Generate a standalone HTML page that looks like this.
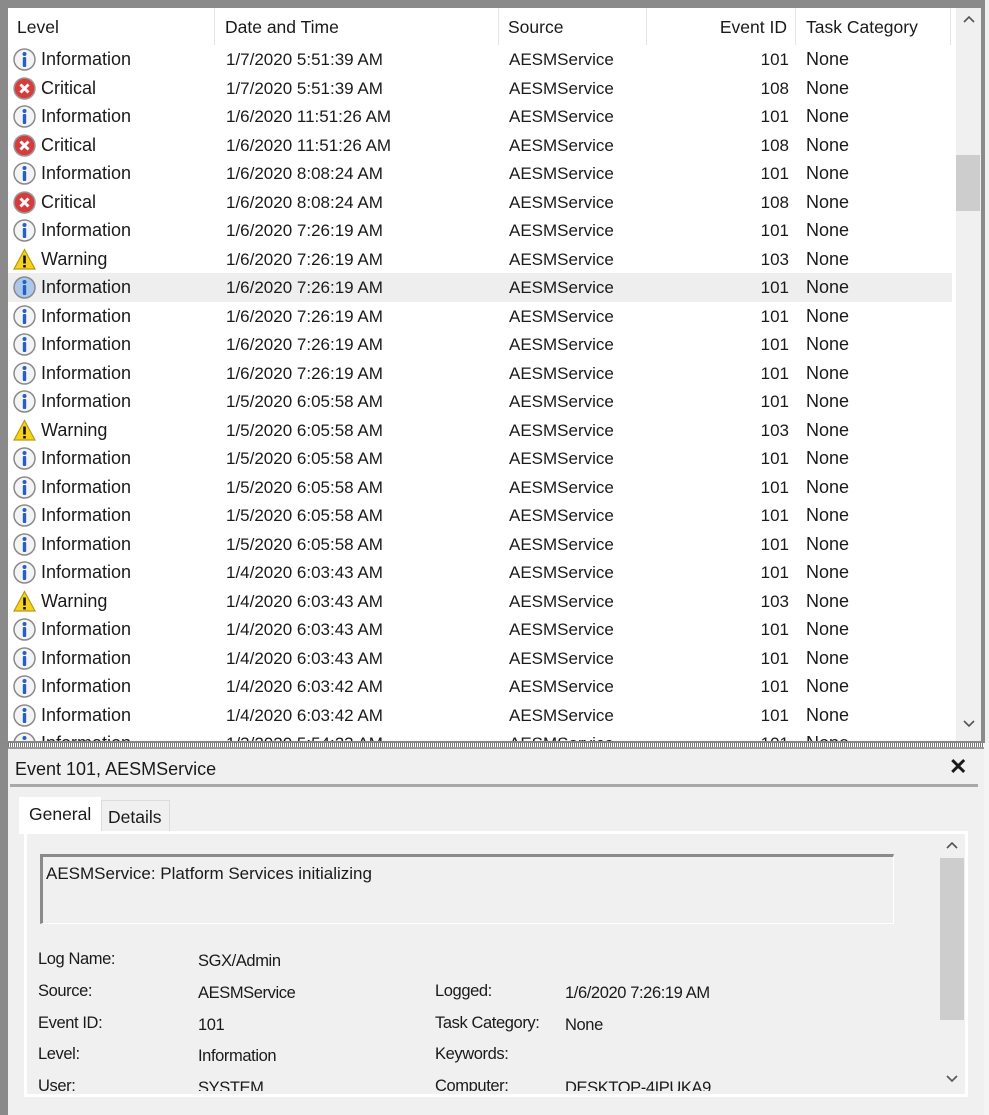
<!DOCTYPE html>
<html><head><meta charset="utf-8"><style>
*{margin:0;padding:0;box-sizing:border-box}
body{width:989px;height:1115px;background:#f0f0f0;font-family:"Liberation Sans",sans-serif;color:#1a1a1a;position:relative;overflow:hidden}
.abs{position:absolute}
#frame{left:0;top:0;width:985px;height:743px;border:1px solid #555;border-top:8px solid #8a8a8a;border-left:8px solid #8a8a8a;border-right:4px solid #8a8a8a;border-bottom:2px solid #888;background:#fff;overflow:hidden}
#list{left:0;top:0;width:948px;height:733px;overflow:hidden;background:#fff}
.hdr{position:absolute;top:0;height:37px;font-size:17.5px;line-height:39px;border-right:1px solid #e5e5e5}
.row{position:absolute;left:0;width:944px;height:28.5px;font-size:17px;line-height:29px}
.row span{position:absolute;top:0;white-space:nowrap}
.row span.l{font-size:18px}
.sel{background:#eeeeee}
.ic{position:absolute;left:5px;top:3px;width:23px;height:23px}
#vs{left:948px;top:0;width:25px;height:733px;background:#f0f0f0}
</style></head><body>
<div id="frame" class="abs">
<div id="list" class="abs">
<div class="hdr" style="left:0;width:207px;padding-left:9px">Level</div>
<div class="hdr" style="left:207px;width:284px;padding-left:10px">Date and Time</div>
<div class="hdr" style="left:491px;width:148px;padding-left:9px">Source</div>
<div class="hdr" style="left:639px;width:149px;text-align:right;padding-right:8px">Event ID</div>
<div class="hdr" style="left:788px;width:155px;padding-left:10px">Task Category</div>
<div id="rows"></div>
</div>
<div id="vs" class="abs">
<svg class="abs" style="left:7px;top:8px" width="12" height="8"><path d="M1 6L6 1L11 6" stroke="#555" stroke-width="1.6" fill="none"/></svg>
<div class="abs" style="left:0;top:147px;width:24px;height:56px;background:#cdcdcd"></div>
<svg class="abs" style="left:7px;top:712px" width="12" height="8"><path d="M1 1L6 6L11 1" stroke="#555" stroke-width="1.6" fill="none"/></svg>
</div>
</div>
<div class="abs" style="left:8px;top:743px;width:977px;height:6px;background:repeating-linear-gradient(90deg,#777 0 1px,#fff 1px 2px);border-bottom:2px solid #999"></div>
<div class="abs" style="left:0;top:743px;width:8px;height:372px;background:#8a8a8a"></div>
<div class="abs" style="left:984px;top:743px;width:5px;height:372px;background:#f4f4f4"></div>
<div class="abs" style="left:15px;top:757px;font-size:18px;line-height:24px">Event 101, AESMService</div>
<div class="abs" style="left:949px;top:754px;font-size:22px;font-weight:bold;line-height:26px">✕</div>
<div class="abs" style="left:10px;top:784px;width:968px;height:3px;background:#a8a8a8"></div>
<div class="abs" style="left:101px;top:800px;width:69px;height:32px;border:1px solid #dcdcdc;border-bottom:none;font-size:17.5px;line-height:33px;padding-left:6px">Details</div>
<div class="abs" style="left:24px;top:831px;width:944px;height:266px;border:3px solid #fff;background:#f0f0f0"></div>
<div class="abs" style="left:19px;top:797px;width:82px;height:37px;background:#fff;font-size:17.5px;line-height:34px;padding-left:10px">General</div>
<div class="abs" style="left:40px;top:854px;width:854px;height:70px;border-top:3px solid #8a8a8a;border-left:3px solid #8a8a8a;border-right:1px solid #fff;border-bottom:1px solid #fff;font-size:17px;line-height:34px;padding-left:3px">AESMService: Platform Services initializing</div>
<div class="abs" style="left:940px;top:834px;width:24px;height:260px;background:#f0f0f0">
<svg class="abs" style="left:6px;top:8px" width="12" height="8"><path d="M1 6L6 1L11 6" stroke="#555" stroke-width="1.6" fill="none"/></svg>
<div class="abs" style="left:0;top:24px;width:24px;height:162px;background:#cdcdcd"></div>
<svg class="abs" style="left:6px;top:241px" width="12" height="8"><path d="M1 1L6 6L11 1" stroke="#555" stroke-width="1.6" fill="none"/></svg>
</div>
<div class="abs" style="left:27px;top:940px;width:912px;height:151px;overflow:hidden;font-size:16.5px;letter-spacing:-0.4px">
<div class="abs" style="left:11px;top:10px">Log Name:</div><div class="abs" style="left:171px;top:12px">SGX/Admin</div>
<div class="abs" style="left:11px;top:42px">Source:</div><div class="abs" style="left:171px;top:44px">AESMService</div>
<div class="abs" style="left:408px;top:42px">Logged:</div><div class="abs" style="left:538px;top:44px">1/6/2020 7:26:19 AM</div>
<div class="abs" style="left:11px;top:74px">Event ID:</div><div class="abs" style="left:171px;top:76px">101</div>
<div class="abs" style="left:408px;top:74px">Task Category:</div><div class="abs" style="left:538px;top:76px">None</div>
<div class="abs" style="left:11px;top:105px">Level:</div><div class="abs" style="left:171px;top:107px">Information</div>
<div class="abs" style="left:408px;top:105px">Keywords:</div>
<div class="abs" style="left:11px;top:137px">User:</div><div class="abs" style="left:171px;top:139px">SYSTEM</div>
<div class="abs" style="left:408px;top:137px">Computer:</div><div class="abs" style="left:538px;top:139px">DESKTOP-4IPUKA9</div>
</div>
<script>
var d=[["I","1/7/2020 5:51:39 AM",101],["C","1/7/2020 5:51:39 AM",108],["I","1/6/2020 11:51:26 AM",101],["C","1/6/2020 11:51:26 AM",108],["I","1/6/2020 8:08:24 AM",101],["C","1/6/2020 8:08:24 AM",108],["I","1/6/2020 7:26:19 AM",101],["W","1/6/2020 7:26:19 AM",103],["S","1/6/2020 7:26:19 AM",101],["I","1/6/2020 7:26:19 AM",101],["I","1/6/2020 7:26:19 AM",101],["I","1/6/2020 7:26:19 AM",101],["I","1/5/2020 6:05:58 AM",101],["W","1/5/2020 6:05:58 AM",103],["I","1/5/2020 6:05:58 AM",101],["I","1/5/2020 6:05:58 AM",101],["I","1/5/2020 6:05:58 AM",101],["I","1/5/2020 6:05:58 AM",101],["I","1/4/2020 6:03:43 AM",101],["W","1/4/2020 6:03:43 AM",103],["I","1/4/2020 6:03:43 AM",101],["I","1/4/2020 6:03:43 AM",101],["I","1/4/2020 6:03:42 AM",101],["I","1/4/2020 6:03:42 AM",101],["I","1/3/2020 5:54:23 AM",101]];
var icI=function(b){return '<svg class="ic" viewBox="0 0 23 23"><circle cx="11.5" cy="11.5" r="10.5" fill="'+(b?'#a9c8ec':'#f4f4f4')+'" stroke="#8a8a8a" stroke-width="1.5"/><circle cx="11.5" cy="6" r="2" fill="#2560c8"/><rect x="9.8" y="9" width="3.4" height="10" rx="1" fill="#2560c8"/></svg>'};
var icC='<svg class="ic" viewBox="0 0 23 23"><circle cx="11.5" cy="11.5" r="10.5" fill="#d63c3c" stroke="#9a9a9a" stroke-width="1.5"/><path d="M7.5 7.5L15.5 15.5M15.5 7.5L7.5 15.5" stroke="#fff" stroke-width="3"/></svg>';
var icW='<svg class="ic" viewBox="0 0 23 23"><path d="M11.5 1.5L22 21H1Z" fill="#f7d21c" stroke="#b89a10" stroke-width="1.2"/><rect x="10.2" y="7.5" width="2.6" height="8" fill="#111"/><rect x="10.2" y="17" width="2.6" height="2.5" fill="#111"/></svg>';
var h='';d.forEach(function(r,i){var t=r[0],ic=t=='C'?icC:t=='W'?icW:icI(t=='S'),lab=t=='C'?'Critical':t=='W'?'Warning':'Information';
h+='<div class="row'+(t=='S'?' sel':'')+'" style="top:'+(37+i*28.5)+'px">'+ic+'<span class="l" style="left:33px">'+lab+'</span><span style="left:218px">'+r[1]+'</span><span style="left:501px">AESMService</span><span style="left:700px;width:81px;text-align:right">'+r[2]+'</span><span class="l" style="left:798px">None</span></div>'});
document.getElementById('rows').innerHTML=h;
</script>
</body></html>
